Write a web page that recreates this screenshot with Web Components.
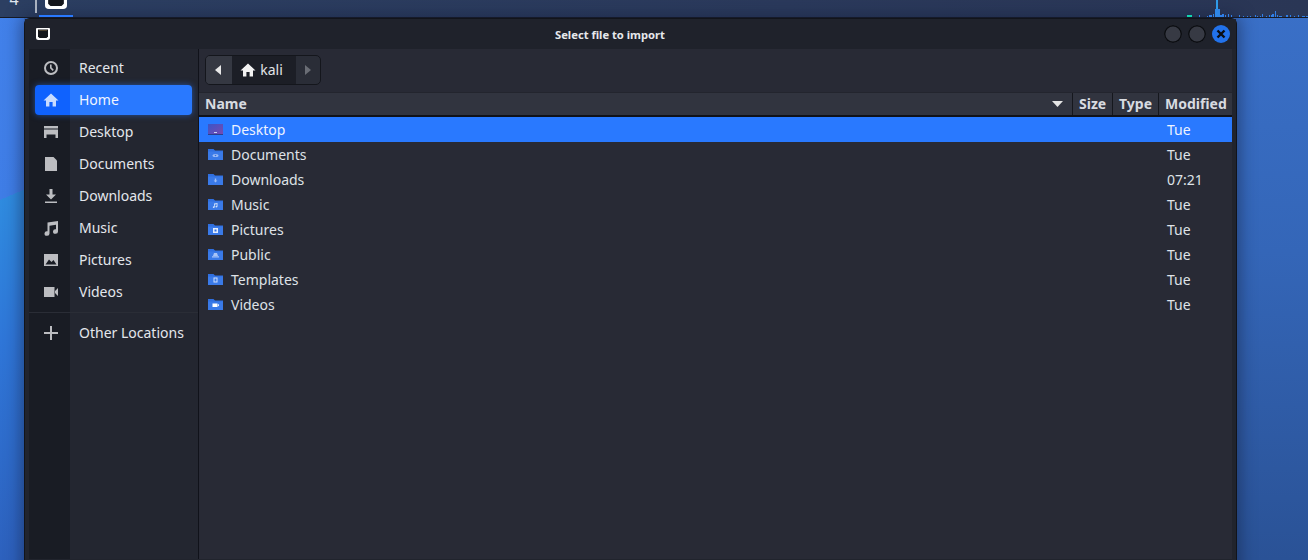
<!DOCTYPE html>
<html>
<head>
<meta charset="utf-8">
<title>Select file to import</title>
<style>
  html, body { margin: 0; height: 100%; overflow: hidden; }
  body { font-family: "Noto Sans", sans-serif; }
</style>
</head>
<body>
<desktop-screen>
  <top-panel slot="panel"></top-panel>
  <file-dialog heading="Select file to import">
    <places-sidebar slot="sidebar">
      <place-row icon="recent">Recent</place-row>
      <place-row icon="home" active>Home</place-row>
      <place-row icon="desktop">Desktop</place-row>
      <place-row icon="documents">Documents</place-row>
      <place-row icon="downloads">Downloads</place-row>
      <place-row icon="music">Music</place-row>
      <place-row icon="pictures">Pictures</place-row>
      <place-row icon="videos">Videos</place-row>
      <place-row icon="other" divided>Other Locations</place-row>
    </places-sidebar>
    <path-bar slot="path"></path-bar>
    <file-list slot="list">
      <file-row kind="desktop" modified="Tue" selected>Desktop</file-row>
      <file-row kind="documents" modified="Tue">Documents</file-row>
      <file-row kind="downloads" modified="07:21">Downloads</file-row>
      <file-row kind="music" modified="Tue">Music</file-row>
      <file-row kind="pictures" modified="Tue">Pictures</file-row>
      <file-row kind="public" modified="Tue">Public</file-row>
      <file-row kind="templates" modified="Tue">Templates</file-row>
      <file-row kind="videos" modified="Tue">Videos</file-row>
    </file-list>
  </file-dialog>
</desktop-screen>

<script>
// 14x12 box: white frame, heavy at the bottom, with a dark screen
const KALI_ICON = `<path fill="#fff" d="M1 0h12a1 1 0 0 1 1 1v8.500a2.500 2.500 0 0 1-2.500 2.500h-9A2.500 2.500 0 0 1 0 9.500V1a1 1 0 0 1 1-1z"/><path fill="#14161b" d="M2 1.500h10v7L10.500 10h-7L2 8.500z"/><path fill="#a98a55" d="M3.500 2.200h1V3h-1zM5.500 2.200h1V3h-1zM7.500 2.200h1V3h-1zM9.500 2.200h1V3h-1z"/>`;

const PLACE_ICONS = {
  recent: `<path fill-rule="evenodd" d="M8 1a7 7 0 1 1 0 14A7 7 0 0 1 8 1zm0 2a5 5 0 1 0 0 10A5 5 0 0 0 8 3z"/><path d="M7 4.500h1.600v3.100l2.200 2.200-1.100 1.100L7 8.200z"/>`,
  home: `<path d="M8 1.500 15.500 8.500H13v6H9.600V10H6.400v4.500H3v-6H.5z"/>`,
  desktop: `<path d="M1 2h14v2.500H1zM1 5.500h14V14h-2.500v-3.500h-9V14H1z"/>`,
  documents: `<path d="M2 1h8.500L14 4.500V15H2z"/>`,
  downloads: `<path d="M6.500 1h3v5.500H13L8 11.500 3 6.500h3.500zM2 13.500h12V15H2z"/>`,
  music: `<path d="M4.500 2.500 15 1v10.500a2.500 2.300 0 1 1-2-2.200V4.800L6.500 5.700v7.800a2.500 2.300 0 1 1-2-2.200z"/>`,
  pictures: `<path fill-rule="evenodd" d="M1 2h14v12H1zM2.500 12.500h11L10.500 8 8.500 10 6 7.500z"/>`,
  videos: `<path d="M1 3h10.500v10H1zM12 7l3-3v8l-3-3z"/>`,
  other: `<path d="M7 1h2v6h6v2H9v6H7V9H1V7h6z"/>`
};

const FOLDER_MARKS = {
  documents: `<ellipse cx="7.500" cy="7.500" rx="3" ry="1.600" fill="#9dbcf5"/><circle cx="7.500" cy="7.500" r=".8" fill="#2f6fe0"/>`,
  downloads: `<path d="M6.800 5.500h1.400v2h1.200L7.500 9.500l-1.900-2h1.200z" fill="#9dbcf5"/>`,
  music: `<path d="M6 5.500 9.500 5v3.600a1 .8 0 1 1-.8-.8V6.200L6.800 6.500v2.600a1 .8 0 1 1-.8-.8z" fill="#cfe0fb"/>`,
  pictures: `<rect x="5" y="5" width="5" height="5" fill="#e4edfd"/><rect x="6.500" y="6.500" width="2" height="2" fill="#2f6fe0"/>`,
  public: `<path d="M6 5h3l1 3H5zM4 8.300h7v1.200H4z" fill="#a8c4f7"/>`,
  templates: `<path d="M5.500 4.500h4v5h-1V5.500h-2v3h2v1h-3z" fill="#cfe0fb"/>`,
  videos: `<rect x="4.500" y="5.500" width="5" height="3.500" fill="#fff"/><path d="M9.500 7 11 6v2.500z" fill="#fff"/>`
};

class TopPanel extends HTMLElement {
  constructor() {
    super();
    this.attachShadow({ mode: 'open' });
    // x, width, height of the graph bars
    const bars = [[1199,1,2],[1207,1,1],[1209,3,2],[1213,1,3],[1220,2,2],[1222,2,3],[1225,1,2],[1228,1,3],[1231,1,2],[1239,1,2],[1243,1,1],[1247,1,1],[1250,1,1],[1255,1,2],[1257,1,1],[1260,1,1],[1262,1,3],[1266,1,1],[1269,1,2],[1271,3,2],[1272,2,3],[1275,1,6],[1277,1,2],[1279,3,1],[1286,2,2],[1290,1,2],[1294,1,1],[1298,1,2],[1302,3,1],[1306,2,1]];
    const graph = bars.map(([x, w, h]) => `<rect x="${x - 1180}" y="${17 - h}" width="${w}" height="${h}" fill="#2f7fe8"/>`).join('');
    this.shadowRoot.innerHTML = `
      <style>
        :host {
          display: flex;
          align-items: flex-start;
          height: 17px;
          background: linear-gradient(90deg, #2c3f62, #2b3a5c 60%, #2a3655);
          border-bottom: 1px solid #161a24;
          color: #dfe5ee;
          font-size: 16px;
        }
        .num { width: 28px; margin-right: 7px; margin-top: -4px; text-align: center; line-height: 6px; }
        .sep { width: 2px; height: 13px; background: #aab2c0; margin-right: 2px; }
        .tab { width: 34px; height: 17px; box-sizing: border-box; border-bottom: 2px solid #2979ff; display: flex; justify-content: center; overflow: hidden; }
        .tab svg { margin-top: -9px; flex: none; }
        .graph { margin-left: auto; width: 128px; height: 17px; display: block; }
      </style>
      <span class="num">4</span>
      <span class="sep"></span>
      <span class="tab"><svg width="22" height="18" viewBox="0 0 14 12" preserveAspectRatio="none">${KALI_ICON}</svg></span>
      <svg class="graph" viewBox="0 0 128 17">
        <rect x="7" y="15" width="5" height="2" fill="#12d6b0"/>
        <rect x="36" y="0" width="2" height="17" fill="#2f9be8"/>
        <rect x="35" y="9" width="5" height="8" fill="#2f86e6"/>
        ${graph}
      </svg>
    `;
  }
}

class DesktopScreen extends HTMLElement {
  constructor() {
    super();
    this.attachShadow({ mode: 'open' });
    this.shadowRoot.innerHTML = `
      <style>
        :host {
          display: block;
          width: 1308px;
          height: 560px;
          overflow: hidden;
          background:
            linear-gradient(157deg, #4281ea 0, #3f7de6 184px, #2f8bdf 184px, #2f76d8 60%, #2d60bc 100%) 0 0 / 24px 100% no-repeat,
            linear-gradient(180deg, #3a70c8 0, #3466b8 45%, #2a5296 100%);
        }
        .win { display: block; padding-left: 24px; width: 1213px; }
      </style>
      <slot name="panel"></slot>
      <div class="win"><slot></slot></div>
    `;
  }
}

class FileDialog extends HTMLElement {
  constructor() {
    super();
    this.attachShadow({ mode: 'open' });
    const heading = this.getAttribute('heading');
    this.shadowRoot.innerHTML = `
      <style>
        :host {
          display: block;
          width: 1213px;
          height: 560px;
          box-sizing: border-box;
          background: #21242d;
          border: 1px solid #12141a;
          border-bottom: 0;
          border-radius: 6px 6px 0 0;
          box-shadow: 0 0 16px 3px rgba(20, 30, 60, .5);
          color: #e4e7ec;
        }
        header {
          height: 30px;
          display: grid;
          grid-template-columns: 1fr auto 1fr;
          align-items: center;
          padding: 0 6px 0 11px;
          background: #1f222b;
        }
        header h1 { margin: 0; padding-right: 46px; font-size: 11.2px; font-weight: 700; color: #e6e8ec; }
        header .kali { display: block; }
        .btns { display: flex; justify-content: flex-end; gap: 6px; }
        .btn { width: 18px; height: 18px; box-sizing: border-box; border-radius: 50%; background: #373a44; box-shadow: inset 0 0 0 1.4px #0c0e12; }
        .close { background: #2272ea; box-shadow: none; display: flex; align-items: center; justify-content: center; }
        .body { display: flex; height: 510px; padding-left: 4px; padding-right: 4px; }
        .side { width: 169px; flex: none; border-right: 1px solid #10121a; }
        main { flex: 1; background: #282a35; min-width: 0; }
        .path { height: 43px; box-sizing: border-box; padding: 6px 0 0 6px; }
      </style>
      <header>
        <svg class="kali" width="14" height="12" viewBox="0 0 14 12">${KALI_ICON}</svg>
        <h1>${heading}</h1>
        <div class="btns">
          <span class="btn"></span>
          <span class="btn"></span>
          <span class="btn close"><svg width="10" height="10" viewBox="0 0 10 10"><path d="M1.500 1.500l7 7M8.500 1.500l-7 7" stroke="#0b0d12" stroke-width="2.400"/></svg></span>
        </div>
      </header>
      <div class="body">
        <div class="side"><slot name="sidebar"></slot></div>
        <main>
          <div class="path"><slot name="path"></slot></div>
          <slot name="list"></slot>
        </main>
      </div>
    `;
  }
}

class PlacesSidebar extends HTMLElement {
  constructor() {
    super();
    this.attachShadow({ mode: 'open' });
    this.shadowRoot.innerHTML = `
      <style>
        :host {
          display: block;
          height: 100%;
          padding-top: 4px;
          box-sizing: border-box;
          background: linear-gradient(90deg, #191c24 41px, #232630 41px);
        }
      </style>
      <slot></slot>
    `;
  }
}

class PlaceRow extends HTMLElement {
  constructor() {
    super();
    this.attachShadow({ mode: 'open' });
    const icon = PLACE_ICONS[this.getAttribute('icon')];
    this.shadowRoot.innerHTML = `
      <style>
        :host {
          display: block;
          height: 30px;
          margin: 0 6px 2px 6px;
          border-radius: 4px;
          font-size: 14px;
        }
        :host([active]) {
          background: linear-gradient(90deg, #0f62fe 35px, #2979ff 35px);
          box-shadow: 0 0 6px rgba(41, 121, 255, .55);
          color: #f0f4ff;
        }
        :host([divided]) { margin-top: 11px; position: relative; }
        :host([divided])::before {
          content: "";
          position: absolute;
          top: -6px;
          left: -6px;
          right: -6px;
          height: 1px;
          background: #2a2d36;
        }
        .row { display: flex; align-items: center; height: 30px; }
        .row span { margin-top: -2px; }
        svg { width: 16px; height: 16px; margin-left: 8px; margin-right: 20px; fill: #bcbdc1; flex: none; }
        :host([active]) svg { fill: #c8dcff; }
      </style>
      <div class="row">
        <svg viewBox="0 0 16 16">${icon}</svg>
        <span><slot></slot></span>
      </div>
    `;
  }
}

class PathBar extends HTMLElement {
  constructor() {
    super();
    this.attachShadow({ mode: 'open' });
    this.shadowRoot.innerHTML = `
      <style>
        :host {
          display: inline-flex;
          height: 30px;
          box-sizing: border-box;
          border: 1px solid #14161c;
          border-radius: 5px;
          background: #2a2d37;
          font-size: 14px;
          line-height: 26px;
          overflow: hidden;
        }
        .nav { display: flex; align-items: center; justify-content: center; }
        .back { width: 26px; background: #353842; padding-right: 2px; box-sizing: border-box; }
        .next { width: 24px; }
        .crumb { width: 64px; box-sizing: border-box; padding-right: 5px; display: flex; align-items: center; justify-content: center; gap: 4px; background: #1c1e26; color: #e2e4e8; }
        svg.home { width: 16px; height: 16px; fill: #f2f2f2; }
      </style>
      <span class="nav back"><svg width="6" height="10" viewBox="0 0 6 10"><path d="M6 0v10L0 5z" fill="#e8e8e8"/></svg></span>
      <span class="crumb"><svg class="home" viewBox="0 0 16 16">${PLACE_ICONS.home}</svg><span>kali</span></span>
      <span class="nav next"><svg width="6" height="10" viewBox="0 0 6 10"><path d="M0 0v10l6-5z" fill="#6a6d75"/></svg></span>
    `;
  }
}

class FileList extends HTMLElement {
  constructor() {
    super();
    this.attachShadow({ mode: 'open' });
    this.shadowRoot.innerHTML = `
      <style>
        :host { display: block; }
        .head {
          display: flex;
          height: 22px;
          background: #31343f;
          border-bottom: 2px solid #101218;
          border-top: 1px solid #23252e;
          font-size: 14px;
          font-weight: 700;
          color: #d8dbe0;
          line-height: 22px;
        }
        .head span { box-sizing: border-box; padding-left: 6px; border-left: 1px solid #15171d; }
        .head .name { flex: 1; border-left: 0; display: flex; align-items: center; justify-content: space-between; padding-right: 9px; }
        .head .size { width: 40px; }
        .head .type { width: 46px; }
        .head .mod { width: 74px; }
      </style>
      <div class="head">
        <span class="name">Name<svg width="11" height="6" viewBox="0 0 11 6"><path d="M0 0h11L5.500 6z" fill="#e4e4e4"/></svg></span>
        <span class="size">Size</span>
        <span class="type">Type</span>
        <span class="mod">Modified</span>
      </div>
      <slot></slot>
    `;
  }
}

class FileRow extends HTMLElement {
  constructor() {
    super();
    this.attachShadow({ mode: 'open' });
    const kind = this.getAttribute('kind');
    const modified = this.getAttribute('modified');
    const icon = kind === 'desktop'
      ? `<defs><linearGradient id="d" x1="0" y1="0" x2="1" y2="1"><stop offset="0" stop-color="#3a55c8"/><stop offset="1" stop-color="#7a4ab0"/></linearGradient></defs><rect y="1" width="15" height="11" fill="url(#d)"/><rect y="11" width="15" height="1" fill="#2a3f8c"/><rect x="6" y="9" width="3" height="1" fill="#c9d4f2"/>`
      : `<path d="M0 1h5.500l1.500 1.500h8V12H0z" fill="#2f6fe0"/><path d="M0 3.500h15V12H0z" fill="#3a7ae8"/>${FOLDER_MARKS[kind]}`;
    this.shadowRoot.innerHTML = `
      <style>
        :host {
          display: flex;
          align-items: center;
          height: 25px;
          font-size: 14px;
          color: #dfe2e7;
        }
        :host([selected]) { background: #2979ff; color: #eef3ff; }
        svg { width: 15px; height: 13px; margin-left: 9px; margin-right: 8px; flex: none; }
        .name { flex: 1; }
        .mod { width: 65px; }
      </style>
      <svg viewBox="0 0 15 13">${icon}</svg>
      <span class="name"><slot></slot></span>
      <span class="mod">${modified}</span>
    `;
  }
}

customElements.define('top-panel', TopPanel);
customElements.define('desktop-screen', DesktopScreen);
customElements.define('file-dialog', FileDialog);
customElements.define('places-sidebar', PlacesSidebar);
customElements.define('place-row', PlaceRow);
customElements.define('path-bar', PathBar);
customElements.define('file-list', FileList);
customElements.define('file-row', FileRow);
</script>
</body>
</html>
